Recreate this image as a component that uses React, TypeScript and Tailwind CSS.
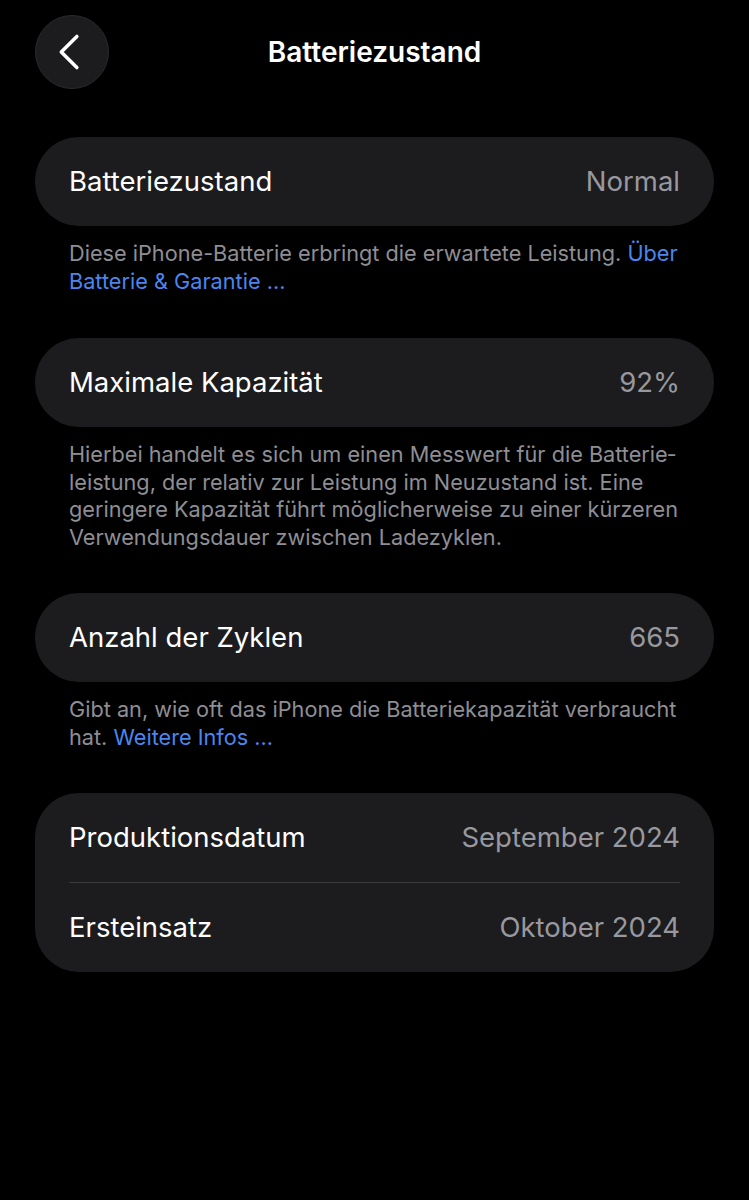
const font = { fontFamily: 'Inter, "Noto Sans", sans-serif' }

function Row({ label, value }: { label: string; value: string }) {
  return (
    <div className="flex h-[89px] items-center justify-between px-[34px]">
      <span className="text-[27.5px] text-white">{label}</span>
      <span className="text-[27.5px] text-[#98989f]">{value}</span>
    </div>
  )
}

function Footer({ children }: { children: React.ReactNode }) {
  return <p className="pl-[34px] pr-[30px] pt-[14px] text-[21.7px] leading-[27.5px] text-[#8e8e94]">{children}</p>
}

export default function App() {
  return (
    <div className="min-h-[1200px] w-[749px] bg-black" style={font}>
      {/* nav bar */}
      <div className="relative flex h-[104px] items-start justify-center pt-[30px]">
        <button className="absolute left-[35px] top-[15px] h-[74px] w-[74px] rounded-full border border-[#2a2a2c] bg-[#1c1c1e]">
          <svg viewBox="0 0 74 74" className="h-full w-full" fill="none" stroke="white" strokeWidth="3.6" strokeLinecap="round" strokeLinejoin="round">
            <path d="M42 21 L26 37 L42 53" />
          </svg>
        </button>
        <h1 className="text-[28px] font-semibold leading-[44px] text-white">Batteriezustand</h1>
      </div>

      <div className="px-[35px] pt-[33px]">
        <div className="rounded-[44px] bg-[#1c1c1e]">
          <Row label="Batteriezustand" value="Normal" />
        </div>
        <Footer>
          Diese iPhone-Batterie erbringt die erwartete Leistung.{' '}
          <span className="text-[#4a86ee]">Über Batterie &amp; Garantie …</span>
        </Footer>

        <div className="mt-[43px] rounded-[44px] bg-[#1c1c1e]">
          <Row label="Maximale Kapazität" value="92%" />
        </div>
        <Footer>
          Hierbei handelt es sich um einen Messwert für die Batterie&shy;leistung, der relativ zur Leistung im
          Neuzustand ist. Eine geringere Kapazität führt möglicherweise zu einer kürzeren Verwendungsdauer zwischen
          Ladezyklen.
        </Footer>

        <div className="mt-[42px] rounded-[44px] bg-[#1c1c1e]">
          <Row label="Anzahl der Zyklen" value="665" />
        </div>
        <Footer>
          Gibt an, wie oft das iPhone die Batteriekapazität verbraucht hat.{' '}
          <span className="text-[#4a86ee]">Weitere Infos …</span>
        </Footer>

        <div className="mt-[42px] rounded-[44px] bg-[#1c1c1e]">
          <Row label="Produktionsdatum" value="September 2024" />
          <div className="mx-[34px] h-px bg-[#3a3a3c]" />
          <Row label="Ersteinsatz" value="Oktober 2024" />
        </div>
      </div>
    </div>
  )
}
